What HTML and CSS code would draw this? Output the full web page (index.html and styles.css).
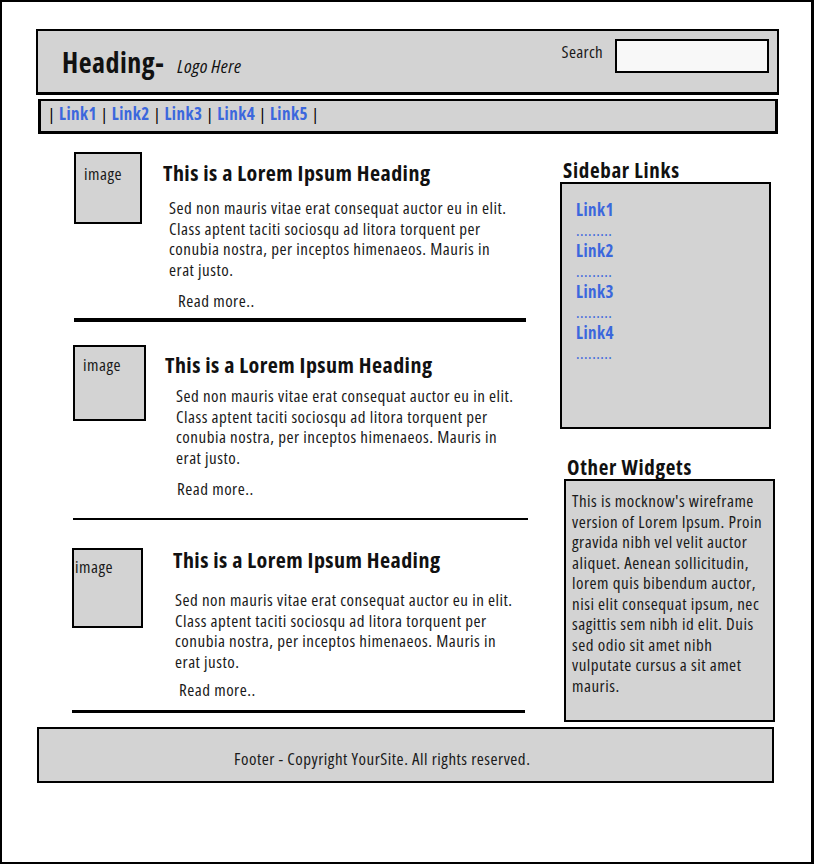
FILE: index.html
```html
<!DOCTYPE html>
<html>
<head>
<meta charset="utf-8">
<link rel="stylesheet" href="styles.css">
</head>
<body>
<div class="page">
  <header class="header">
    <div class="brand"><span class="brand-title">Heading-</span><span class="brand-logo">Logo Here</span></div>
    <div class="search"><span class="search-label">Search</span><span class="search-box"></span></div>
  </header>
  <nav class="nav">| <a>Link1</a> | <a>Link2</a> | <a>Link3</a> | <a>Link4</a> | <a>Link5</a> |</nav>
  <div class="main">
    <div class="articles">
      <article class="article a1">
        <div class="thumb">image</div>
        <div class="body">
          <h2 class="title">This is a Lorem Ipsum Heading</h2>
          <p class="text">Sed non mauris vitae erat consequat auctor eu in elit. Class aptent taciti sociosqu ad litora torquent per conubia nostra, per inceptos himenaeos. Mauris in erat justo.</p>
          <div class="more">Read more..</div>
        </div>
      </article>
      <article class="article a2">
        <div class="thumb">image</div>
        <div class="body">
          <h2 class="title">This is a Lorem Ipsum Heading</h2>
          <p class="text">Sed non mauris vitae erat consequat auctor eu in elit. Class aptent taciti sociosqu ad litora torquent per conubia nostra, per inceptos himenaeos. Mauris in erat justo.</p>
          <div class="more">Read more..</div>
        </div>
      </article>
      <article class="article a3">
        <div class="thumb">image</div>
        <div class="body">
          <h2 class="title">This is a Lorem Ipsum Heading</h2>
          <p class="text">Sed non mauris vitae erat consequat auctor eu in elit. Class aptent taciti sociosqu ad litora torquent per conubia nostra, per inceptos himenaeos. Mauris in erat justo.</p>
          <div class="more">Read more..</div>
        </div>
      </article>
    </div>
    <aside class="sidebar">
      <h3 class="side-title st1">Sidebar Links</h3>
      <div class="side-box links-box">
        <a class="side-link">Link1</a><div class="dots">.........</div>
        <a class="side-link">Link2</a><div class="dots">.........</div>
        <a class="side-link">Link3</a><div class="dots">.........</div>
        <a class="side-link">Link4</a><div class="dots">.........</div>
      </div>
      <h3 class="side-title st2">Other Widgets</h3>
      <div class="side-box widget-box">This is mocknow's wireframe version of Lorem Ipsum. Proin gravida nibh vel velit auctor aliquet. Aenean sollicitudin, lorem quis bibendum auctor, nisi elit consequat ipsum, nec sagittis sem nibh id elit. Duis sed odio sit amet nibh vulputate cursus a sit amet mauris.</div>
    </aside>
  </div>
  <footer class="footer">Footer - Copyright YourSite. All rights reserved.</footer>
</div>
</body>
</html>
```
FILE: styles.css
```css
* { box-sizing: border-box; }
html, body { margin: 0; padding: 0; }
body {
  font-family: "Open Sans", "Liberation Sans", sans-serif;
  font-stretch: 75%;
  font-size: 17px;
  letter-spacing: 0.5px;
  color: #1a1a1a;
  background: #fff;
}
.page {
  width: 814px;
  height: 864px;
  border: 2px solid #000;
  border-right-width: 3px;
  padding-top: 27px;
  overflow: hidden;
}
.header {
  margin-left: 34px;
  width: 743px;
  height: 66px;
  background: #d3d3d3;
  border: 2px solid #000;
  border-bottom-width: 3px;
  display: flex;
  justify-content: space-between;
}
.brand { display: flex; align-items: baseline; padding: 14px 0 0 24px; color: #111; }
.brand-title { font-size: 28px; font-weight: 700; line-height: 34px; letter-spacing: 0.5px; }
.brand-logo { font-size: 19px; font-style: italic; margin-left: 13px; letter-spacing: 0.4px; }
.search { display: flex; align-items: flex-start; padding: 8px 8px 0 0; }
.search-label { line-height: 24px; margin-right: 12px; margin-top: 1px; letter-spacing: 0.3px; }
.search-box {
  width: 154px; height: 34px;
  background: #f8f8f8;
  border: 2px solid #000;
}
.nav {
  margin: 4px 0 0 36px;
  width: 740px;
  height: 35px;
  background: #d3d3d3;
  border: 3px solid #000;
  border-top-width: 2px;
  padding: 2px 0 0 7px;
  line-height: 22px;
  color: #000;
}
.nav a { color: #3b67dd; font-weight: 700; }
.main { display: flex; align-items: flex-start; }
.articles { width: 530px; padding-left: 70px; }
.article { display: flex; align-items: flex-start; border-bottom: 3px solid #000; }
.thumb {
  flex: none;
  background: #d3d3d3;
  border: 2px solid #000;
  line-height: 20px;
}
.title { margin: 0; font-size: 22px; font-weight: 700; line-height: 26px; white-space: nowrap; letter-spacing: 0.45px; color: #111; }
.text { margin: 0; line-height: 20.5px; width: 346px; }
.more { line-height: 20px; }

.a1 { margin-left: 2px; width: 452px; padding-top: 18px; border-bottom-width: 4px; }
.a1 .thumb { width: 68px; height: 72px; padding: 10px 0 0 8px; }
.a1 .body { margin-left: 21px; padding-top: 7px; }
.a1 .text { margin: 13px 0 0 6px; }
.a1 .more { margin: 11px 0 0 15px; padding-bottom: 7px; }

.a2 { margin-left: 1px; width: 455px; padding-top: 23px; border-bottom-width: 2px; }
.a2 .thumb { width: 73px; height: 76px; padding: 8px 0 0 8px; }
.a2 .body { margin-left: 19px; padding-top: 6px; }
.a2 .text { margin: 9px 0 0 11px; }
.a2 .more { margin: 11px 0 0 12px; padding-bottom: 19px; }

.a3 { margin-left: 0; width: 453px; padding-top: 28px; border-bottom-width: 3px; }
.a3 .thumb { width: 71px; height: 80px; padding: 7px 0 0 1px; }
.a3 .body { margin-left: 30px; margin-top: -2px; }
.a3 .text { margin: 18px 0 0 2px; }
.a3 .more { margin: 8px 0 0 6px; padding-bottom: 10px; }

.sidebar { width: 230px; padding-left: 28px; }
.side-title { margin: 0; font-size: 21px; font-weight: 700; line-height: 24px; letter-spacing: 0.7px; color: #111; }
.st1 { margin: 24px 0 0 3px; }
.side-box { background: #d3d3d3; border: 2px solid #000; }
.links-box { width: 211px; height: 247px; padding: 16px 0 0 14px; }
.side-link { display: block; color: #3b67dd; font-weight: 700; line-height: 20px; }
.dots { color: #3b67dd; font-size: 16px; line-height: 21px; height: 21px; }
.st2 { margin: 26px 0 0 7px; }
.widget-box { margin-left: 4px; width: 211px; height: 243px; padding: 10px 4px 0 6px; line-height: 20.5px; }
.footer {
  margin: 5px 0 0 35px;
  width: 737px;
  height: 56px;
  background: #d3d3d3;
  border: 2px solid #000;
  padding: 19px 0 0 195px;
  line-height: 22px;
}
```
